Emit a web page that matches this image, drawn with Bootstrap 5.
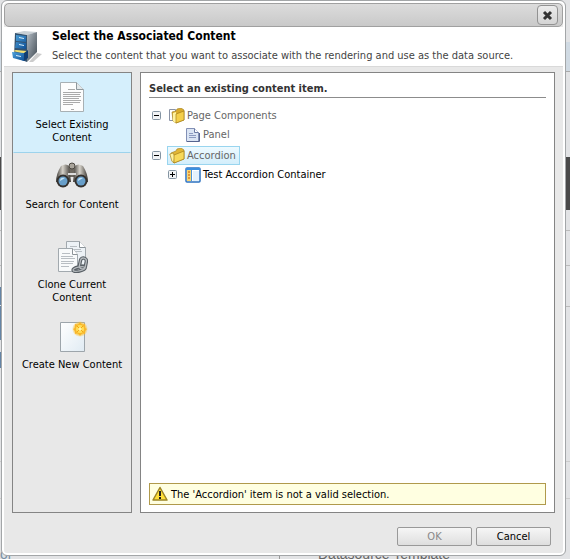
<!DOCTYPE html>
<html lang="en">
<head>
<meta charset="utf-8">
<meta name="viewport" content="width=device-width, initial-scale=1">
<title>Select the Associated Content</title>
<link href="https://cdn.jsdelivr.net/npm/bootstrap@5.3.0/dist/css/bootstrap.min.css" rel="stylesheet">
<style>
  body { font-family: "DejaVu Sans Condensed", Tahoma, "DejaVu Sans", sans-serif; font-size: 11px; line-height: 13px; color: #000; background: #e2e3e5; }
  svg { display: block; flex: none; }
  .page-behind { z-index: -1;
    background:
      linear-gradient(#4a4a4a, #4a4a4a) 0 157px / 100% 53px no-repeat,
      linear-gradient(#6484a6, #6484a6) 0 287px / 2px 18px no-repeat,
      linear-gradient(#6484a6, #6484a6) 0 306px / 2px 34px no-repeat,
      linear-gradient(#6484a6, #6484a6) 0 352px / 2px 16px no-repeat,
      linear-gradient(#d0dae3, #d0dae3) 0 42px / 100% 29px no-repeat,
      linear-gradient(#aaa, #aaa) 0 71px / 100% 1px no-repeat,
      linear-gradient(#bbb, #bbb) 0 230px / 100% 1px no-repeat,
      linear-gradient(#bbb, #bbb) 0 265px / 100% 1px no-repeat,
      linear-gradient(#bbb, #bbb) 0 306px / 100% 1px no-repeat,
      linear-gradient(#ccc, #ccc) 0 461px / 100% 1px no-repeat,
      linear-gradient(#ccc, #ccc) 0 498px / 100% 1px no-repeat,
      linear-gradient(#999, #999) 279px 100% / 1px 3px no-repeat,
      #e2e3e5; }
  .behind-label { font: 14px/18px "Liberation Sans", sans-serif; color: #666; left: 318px; top: 545px; }
  .behind-link { font: 14px/18px "Liberation Sans", sans-serif; color: #7890a4; left: 0; top: 545px; }
  .dialog-shell { min-height: 100vh; padding: 0 4px 3px 1px; }
  .dialog-box { border: 1px solid #a3a6a8; border-radius: 6px; background: #e8e8e8; padding: 2px; box-shadow: inset 0 0 0 2px #fff; }
  .title-strip { height: 24px; border: 1px solid #a0a0a0; border-radius: 5px; background: linear-gradient(#dcdcdc, #c9c9c9); padding-right: 4px; }
  .close-btn { width: 21px; height: 20px; padding: 0; border: 1px solid #929292; border-radius: 4px; background: linear-gradient(#ececec, #d4d4d4); }
  .head-band { height: 40px; background: #fff; border-bottom: 1px solid #d9d9d9; padding-left: 8px; gap: 6px; }
  .head-title { font-size: 12px; line-height: 19px; font-weight: 700; margin: 0; }
  .head-text { color: #444; line-height: 19px; }
  .work-area { padding: 5px 8px 0; gap: 8px; }
  .side-list { width: 120px; border: 1px solid #848484; }
  .side-item { height: 80px; padding: 7px 4px 0; gap: 5px; border: 1px solid transparent; background: none; line-height: 13px; color: #000; }
  .side-item.current { background: #d5effc; border-color: #d5effc #d5effc #9dd3ec; }
  .main-pane { border: 1px solid #848484; background: #fff; padding: 9px 8px 7px; min-width: 0; }
  .pane-title { font-size: 11px; line-height: 14px; font-weight: 700; color: #333; padding-bottom: 1px; border-bottom: 1px solid #8c8c8c; margin: 0 0 8px; }
  .tree-row { height: 19px; gap: 6px; }
  .tree-group { padding-bottom: 2px; }
  .tree-child { padding-left: 16px; }
  .tree-root { padding-left: 3px; }
  .tree-leaf { padding-left: 15px; }
  .toggle-btn { width: 9px; height: 9px; padding: 0; border: 0; background: none; }
  .tree-link { color: #666; height: 19px; gap: 2px; padding: 0 3px 0 1px; border: 1px solid transparent; text-decoration: none; }
  .tree-link.live { color: #000; }
  .tree-link.chosen { background: linear-gradient(#eefaff, #d3eefb); border-color: #99d5ef; }
  .notice { border: 1px solid #b09a4c; background: #ffffe1; height: 22px; padding-left: 2px; gap: 3px; }
  .foot-bar { padding: 14px 12px 7px; gap: 4px; }
  .foot-btn { width: 75px; height: 19px; padding: 0; border: 1px solid #999; border-radius: 2px; background: linear-gradient(#f6f6f6, #dedede); color: #000; }
  .foot-btn:disabled { color: #888; }
</style>
<script src="https://cdn.jsdelivr.net/npm/bootstrap@5.3.0/dist/js/bootstrap.bundle.min.js"></script>
</head>
<body>
<div class="page-behind position-absolute top-0 start-0 w-100 h-100 overflow-hidden">
  <span class="behind-link position-absolute">or</span>
  <span class="behind-label position-absolute text-nowrap">Datasource Template</span>
</div>

<div class="dialog-shell d-flex">
<section class="dialog-box flex-fill d-flex flex-column" role="dialog" aria-labelledby="dlgTitle">
  <div class="title-strip d-flex align-items-center justify-content-end">
    <button class="close-btn d-flex align-items-center justify-content-center" type="button" aria-label="Close">
      <svg width="11" height="11" viewBox="0 0 11 11"><path d="M2 2l7 7M9 2l-7 7" stroke="#333" stroke-width="3"/></svg>
    </button>
  </div>
  <header class="head-band d-flex align-items-start">
    <svg class="align-self-center" width="34" height="34" viewBox="0 0 34 34">
      <defs>
        <linearGradient id="cabSide" x1="0" x2="1" y2="1"><stop offset="0" stop-color="#b3bcc4"/><stop offset="1" stop-color="#3f4952"/></linearGradient>
        <linearGradient id="cabBlue" x1="0" y1="0" x2="1" y2="1"><stop offset="0" stop-color="#4fa3dc"/><stop offset="1" stop-color="#0d4f96"/></linearGradient>
      </defs>
      <path d="M17 32l8-9 5 1-9 8z" fill="#999" opacity=".5"/>
      <path d="M3 3l9-2 13 1-9 3z" fill="#c9d0d5"/>
      <path d="M15 5l10-3v20l-10 10z" fill="url(#cabSide)"/>
      <path d="M3 3l12 2v27L2 27z" fill="#33526f"/>
      <path d="M4 5l10 1v6L4 11zM4 12l10 1v6L3 18z" fill="url(#cabBlue)"/>
      <path d="M7 7l5 1v1l-5-1zM7 14l5 1v1l-5-1z" fill="#d9eefa"/>
      <path d="M1 21l3-1 11 1-2 3z" fill="#f4df72"/>
      <path d="M0 22l12 1v8L1 28z" fill="url(#cabBlue)"/><path d="M12 23l4-3v8l-4 3z" fill="#123e72"/>
      <path d="M4 25l5 1v1l-5-1z" fill="#d9eefa"/>
    </svg>
    <div>
      <h1 class="head-title" id="dlgTitle">Select the Associated Content</h1>
      <div class="head-text">Select the content that you want to associate with the rendering and use as the data source.</div>
    </div>
  </header>

  <div class="work-area flex-fill d-flex">
    <nav class="side-list d-flex flex-column flex-shrink-0" aria-label="Source">
      <button type="button" class="side-item current d-flex flex-column align-items-center">
        <svg width="32" height="32" viewBox="0 0 32 32">
          <path d="M4.500 1.500h16l7 7v22h-23z" fill="#fdfdfd" stroke="#a8b0b4"/><path d="M20.500 1.500v7h7" fill="#e3e8ea" stroke="#8f989d"/>
          <path d="M12 8.500h7M7 11.500h18M7 13.500h17M7 15.500h18M7 17.500h16M7 19.500h18M7 21.500h17M7 23.500h10M15 28.500h3" stroke="#aaa"/>
        </svg>
        <span>Select Existing<br>Content</span>
      </button>
      <button type="button" class="side-item d-flex flex-column align-items-center">
        <svg width="32" height="32" viewBox="0 0 32 32">
          <defs><linearGradient id="tube" x1="0" x2="1"><stop offset="0" stop-color="#3d3a36"/><stop offset=".45" stop-color="#d6d2ca"/><stop offset="1" stop-color="#38342f"/></linearGradient></defs>
          <path d="M12 5h8v11h-8z" fill="#6e6961"/><circle cx="16" cy="5" r="3" fill="#aaa59c" stroke="#4b4741"/>
          <path d="M5 5q5-3 8 0l2 16H0q0-8 5-16z" fill="url(#tube)"/>
          <path d="M27 5q-5-3-8 0l-2 16h15q0-8-5-16z" fill="url(#tube)"/>
          <path d="M12 13h8" stroke="#ddd" stroke-width="2"/>
          <circle cx="7" cy="20" r="6.500" fill="#34312e"/><circle cx="25" cy="20" r="6.500" fill="#34312e"/>
          <circle cx="7" cy="20" r="4.500" fill="#689fca"/><circle cx="25" cy="20" r="4.500" fill="#689fca"/>
          <path d="M4 20q0-4 5-3zM22 20q0-4 5-3z" fill="#c5e2f4"/>
        </svg>
        <span>Search for Content</span>
      </button>
      <button type="button" class="side-item d-flex flex-column align-items-center">
        <svg width="32" height="32" viewBox="0 0 32 32">
          <path d="M10.500 .5h13l6 6v17h-19z" fill="#edf2f6" stroke="#a2a9ae"/><path d="M23.500 .5v6h6" fill="#fff" stroke="#8c9499"/>
          <path d="M14 5.500h7M13 8.500h12M13 10.500h13" stroke="#b8bec3"/>
          <path d="M2.500 7.500h14l5 6v17h-19z" fill="#f8fafb" stroke="#a2a9ae"/><path d="M16.500 7.500v6h5" fill="#fff" stroke="#8c9499"/>
          <path d="M6 12.500h8M5 15.500h12M5 17.500h14M5 20.500h13M5 22.500h12M5 25.500h8" stroke="#b8bec3"/>
          <g fill="none" stroke="#596066" stroke-width="3.500"><rect x="24" y="17" width="6" height="11" rx="3" transform="rotate(12 27 22)"/><ellipse cx="23" cy="28" rx="6" ry="2" transform="rotate(-12 23 28)"/></g>
          <g fill="none" stroke="#b5babe" stroke-width="1.300"><rect x="24" y="17" width="6" height="11" rx="3" transform="rotate(12 27 22)"/><ellipse cx="23" cy="28" rx="6" ry="2" transform="rotate(-12 23 28)"/></g>
        </svg>
        <span>Clone Current<br>Content</span>
      </button>
      <button type="button" class="side-item d-flex flex-column align-items-center">
        <svg width="32" height="32" viewBox="0 0 32 32">
          <defs>
            <linearGradient id="blank" x1="0" y1="0" x2="1" y2="1"><stop offset="0" stop-color="#fff"/><stop offset="1" stop-color="#e0ebf3"/></linearGradient>
            <radialGradient id="glow"><stop offset=".6" stop-color="#fbc02d"/><stop offset="1" stop-color="#fbc02d" stop-opacity="0"/></radialGradient>
          </defs>
          <path d="M4.500 1.500h24v29h-24z" fill="url(#blank)" stroke="#9da5ab"/>
          <circle cx="24" cy="8" r="8" fill="url(#glow)"/>
          <path d="M24 1l2 3 3-1v4l2 1-2 2v3l-3-1-2 3-2-3-3 1v-3l-2-2 2-1V3l3 1z" fill="#f8b62a"/>
          <circle cx="24" cy="8" r="4" fill="#ffdd57"/><path d="M21 5l6 6M27 5l-6 6" stroke="#f2a514"/><circle cx="24" cy="8" r="1.500" fill="#fff3ae"/>
        </svg>
        <span>Create New Content</span>
      </button>
    </nav>

    <main class="main-pane flex-fill d-flex flex-column">
      <h2 class="pane-title">Select an existing content item.</h2>
      <div class="tree-root flex-fill">
        <div class="tree-group">
          <div class="tree-row d-flex align-items-center">
            <button class="toggle-btn" type="button" aria-label="Collapse Page Components"><svg width="9" height="9" viewBox="0 0 9 9"><rect x=".5" y=".5" width="8" height="8" rx="1" fill="#f1f3f5" stroke="#8494a2"/><path d="M2 4.500h5" stroke="#000"/></svg></button>
            <a class="tree-link d-flex align-items-center" href="#">
              <svg width="16" height="16" viewBox="0 0 16 16"><path d="M.5 1.500h6v11h-6z" fill="#fff" stroke="#8a93a6"/><path d="M3 4l4-1 1-2 4-1 3 2v10l-8 3-3-2z" fill="#d9ab2c" stroke="#a8862a" stroke-width=".7"/><path d="M4 5l3-1 1 9-2 2-2-2z" fill="#fff3a0"/><path d="M7 6l8-3v9l-8 3z" fill="#f4cf4a" stroke="#a57e18" stroke-width=".7"/></svg>
              <span>Page Components</span></a>
          </div>
          <div class="tree-child"><div class="tree-row tree-leaf d-flex align-items-center">
            <a class="tree-link d-flex align-items-center" href="#">
              <svg width="16" height="16" viewBox="0 0 16 16"><path d="M1.500 1.500h8l4 4v9h-12z" fill="#dbe5f4" stroke="#8290b6"/><path d="M9.500 1.500v4h4" fill="#fff" stroke="#6c7ba4"/><path d="M4 6.500h4M4 8.500h7M4 10.500h7" stroke="#8d9bc0"/><path d="M2 14.500h12.500V6" fill="none" stroke="#56648f"/></svg>
              <span>Panel</span></a>
          </div></div>
        </div>
        <div class="tree-group">
          <div class="tree-row d-flex align-items-center">
            <button class="toggle-btn" type="button" aria-label="Collapse Accordion"><svg width="9" height="9" viewBox="0 0 9 9"><rect x=".5" y=".5" width="8" height="8" rx="1" fill="#f1f3f5" stroke="#8494a2"/><path d="M2 4.500h5" stroke="#000"/></svg></button>
            <a class="tree-link chosen d-flex align-items-center" href="#">
              <svg width="16" height="16" viewBox="0 0 16 16"><path d="M2 5l5-2 1-2 4-1 3 2v9l-10 4z" fill="#e2b635" stroke="#a8862a" stroke-width=".7"/><path d="M.8 6l3-1 2 3-1 7-2-2z" fill="#fff3a0" stroke="#a58220" stroke-width=".7"/><path d="M5 7l10-4v8L5 15z" fill="#f7d95a" stroke="#a57e18" stroke-width=".7"/></svg>
              <span>Accordion</span></a>
          </div>
          <div class="tree-child"><div class="tree-row d-flex align-items-center">
            <button class="toggle-btn" type="button" aria-label="Expand Test Accordion Container"><svg width="9" height="9" viewBox="0 0 9 9"><rect x=".5" y=".5" width="8" height="8" rx="1" fill="#f1f3f5" stroke="#8494a2"/><path d="M2 4.500h5M4.500 2v5" stroke="#000"/></svg></button>
            <a class="tree-link live d-flex align-items-center" href="#">
              <svg width="16" height="16" viewBox="0 0 16 16"><rect x="1" y="1" width="14" height="14" rx="1" fill="#fff" stroke="#2c72c0" stroke-width="1.500"/><path d="M1 1h14v2H1z" fill="#3b8fe0"/><path d="M2 3h4v11H2z" fill="#fbd774"/><path d="M3 5h2M3 8h2M3 11h2" stroke="#d9822b" stroke-width="1.500"/><path d="M6.500 3v11" stroke="#4a93d8"/><path d="M8 4h6v10H8z" fill="#e4f2fd"/></svg>
              <span>Test Accordion Container</span></a>
          </div></div>
        </div>
      </div>
      <div class="notice d-flex align-items-center" role="alert">
        <svg width="16" height="16" viewBox="0 0 16 16"><path d="M8 1.500L15 14H1z" fill="#ffe03a" stroke="#9c8526" stroke-width="1.500" stroke-linejoin="round"/><path d="M8 5v5M8 11v2" stroke="#222" stroke-width="2"/></svg>
        <span>The 'Accordion' item is not a valid selection.</span>
      </div>
    </main>
  </div>

  <footer class="foot-bar d-flex justify-content-end">
    <button class="foot-btn" type="button" disabled>OK</button>
    <button class="foot-btn" type="button">Cancel</button>
  </footer>
</section>
</div>
</body>
</html>
